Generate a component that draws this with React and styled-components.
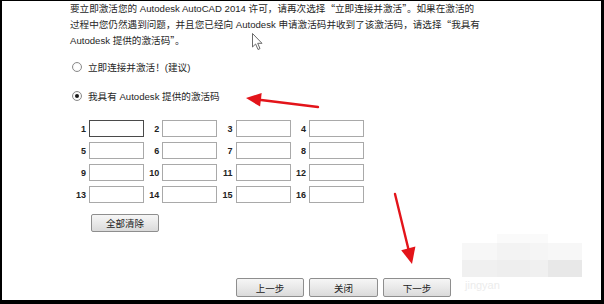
import React from 'react';
import styled, { createGlobalStyle } from 'styled-components';

const GlobalStyle = createGlobalStyle`
  html, body {
    margin: 0;
    padding: 0;
    background: #000;
  }
`;

// black screenshot frame around the white dialog
const Frame = styled.div`
  position: relative;
  width: 604px;
  height: 304px;
  box-sizing: border-box;
  padding: 1px 3px 4px 2px;
  background: #000;
  overflow: hidden;
`;

const Panel = styled.div`
  height: 100%;
  box-sizing: border-box;
  background: #fff;
  padding-left: 68px;
  font-family: "Liberation Sans", "Noto Sans CJK SC", sans-serif;
  color: #262626;
  display: flex;
  flex-direction: column;
  align-items: flex-start;
`;

const Intro = styled.div`
  margin-top: -1px;
  font-size: 9.6px;
  white-space: nowrap;
`;

const IntroLine = styled.div`
  height: 16px;
  line-height: 16px;
  overflow: visible;
`;

// full-width Chinese quotation marks
const Cjk = styled.span`
  font-family: "Noto Sans CJK SC", sans-serif;
`;

const Options = styled.div`
  display: flex;
  flex-direction: column;
  gap: 13px;
  margin-top: 11px;
  padding-left: 2px;
`;

const Option = styled.label`
  display: flex;
  align-items: center;
  gap: 6px;
  height: 16px;
  font-size: 9.6px;
`;

const Radio = styled.input.attrs({ type: 'radio', name: 'mode' })`
  appearance: none;
  margin: 0;
  width: 10px;
  height: 10px;
  border-radius: 50%;
  border: 1px solid #8a8a8a;
  box-sizing: border-box;
  background: radial-gradient(circle, #fff 40%, #ececec 100%);
  display: grid;
  place-items: center;

  &:checked::after {
    content: '';
    width: 4px;
    height: 4px;
    border-radius: 50%;
    background: #1a1a1a;
  }
`;

const CodeGrid = styled.div`
  display: grid;
  grid-template-columns: repeat(4, 73.3px);
  row-gap: 5px;
  margin-top: 16px;
  margin-left: 1px;
`;

const Cell = styled.div`
  display: flex;
  align-items: center;
  justify-content: flex-end;
  height: 17px;
  width: 73px;
`;

const CellLabel = styled.span`
  font-size: 9px;
  font-weight: bold;
  color: #222;
  margin-right: 3px;
`;

const CodeInput = styled.input`
  width: 55px;
  height: 17px;
  box-sizing: border-box;
  margin: 0;
  padding: 0 2px;
  border: 1px solid ${(p) => (p.$active ? '#4a4a4a' : '#a9a9a9')};
  background: #fff;
  outline: none;
`;

const Button = styled.button`
  width: ${(p) => p.$w || 68}px;
  height: ${(p) => p.$h || 19}px;
  padding: 0;
  border: 1px solid #8e8e8e;
  border-radius: 2px;
  background: linear-gradient(#f6f6f6, #e9e9e9 50%, #dadada);
  font-family: "Noto Sans CJK SC", sans-serif;
  font-size: 9.5px;
  color: #222;
`;

const ClearButton = styled(Button)`
  margin: 11px 0 0 21px;
`;

const Footer = styled.div`
  display: flex;
  gap: 5px;
  margin: 46px 0 0 166px;
`;

const Overlay = styled.svg`
  position: absolute;
  left: 0;
  top: 0;
  pointer-events: none;
`;

// blurred site watermark in the lower right corner
const Watermark = styled.div`
  position: absolute;
  left: 462px;
  top: 234px;
  width: 120px;
  display: grid;
  grid-template-columns: 35px 33px 18px 34px;
  grid-template-rows: 9px 17px 17px 16px;
  pointer-events: none;
`;

const Blot = styled.div`
  background: ${(p) => p.$c};
`;

const WatermarkText = styled.span`
  grid-column: 1 / span 4;
  font-family: "Liberation Sans", sans-serif;
  font-size: 11px;
  line-height: 16px;
  color: #ececec;
  padding-left: 3px;
`;

const shades = [
  '#fff', '#fafafa', '#fafafa', '#fff',
  '#f7f7f7', '#f3f3f3', '#f5f5f5', '#f7f7f7',
  '#f0f0f0', '#eeeeee', '#f0f0f0', '#e8e8e8',
];

const App = () => {
  const cells = Array.from({ length: 16 }, (_, i) => i + 1);

  return (
    <Frame>
      <GlobalStyle />
      <Panel>
        <Intro>
          <IntroLine>
            要立即激活您的 Autodesk AutoCAD 2014 许可，请再次选择<Cjk>“</Cjk>立即连接并激活<Cjk>”</Cjk>。如果在激活的
          </IntroLine>
          <IntroLine>
            过程中您仍然遇到问题，并且您已经向 Autodesk 申请激活码并收到了该激活码，请选择<Cjk>“</Cjk>我具有
          </IntroLine>
          <IntroLine>
            Autodesk 提供的激活码<Cjk>”</Cjk>。
          </IntroLine>
        </Intro>

        <Options>
          <Option>
            <Radio />
            立即连接并激活！(建议)
          </Option>
          <Option>
            <Radio defaultChecked />
            我具有 Autodesk 提供的激活码
          </Option>
        </Options>

        <CodeGrid>
          {cells.map((n) => (
            <Cell key={n}>
              <CellLabel>{n}</CellLabel>
              <CodeInput $active={n === 1} />
            </Cell>
          ))}
        </CodeGrid>

        <ClearButton $h={18}>全部清除</ClearButton>

        <Footer>
          <Button>上一步</Button>
          <Button $w={69}>关闭</Button>
          <Button>下一步</Button>
        </Footer>
      </Panel>

      <Watermark>
        {shades.map((c, i) => (
          <Blot key={i} $c={c} />
        ))}
        <WatermarkText>jingyan</WatermarkText>
      </Watermark>

      <Overlay width="604" height="304" viewBox="0 0 604 304">
        {/* mouse cursor */}
        <path
          d="M252.5 33.5 L252.5 47 L255.6 44 L258 49.5 L260 48.6 L257.7 43.3 L262 43.3 Z"
          fill="#fff"
          stroke="#5a5a5a"
          strokeWidth="0.9"
          strokeLinejoin="round"
        />
        {/* red arrows */}
        <line x1="318" y1="107" x2="259" y2="99.7" stroke="#e3141a" strokeWidth="2.4" strokeLinecap="round" />
        <polygon points="246,98 261.7,93 260.1,106.6" fill="#e3141a" />
        <line x1="395" y1="194" x2="408.4" y2="249" stroke="#e3141a" strokeWidth="2.4" strokeLinecap="round" />
        <polygon points="412,264 415.4,246.6 401.2,250.2" fill="#e3141a" />
      </Overlay>
    </Frame>
  );
};

export default App;
